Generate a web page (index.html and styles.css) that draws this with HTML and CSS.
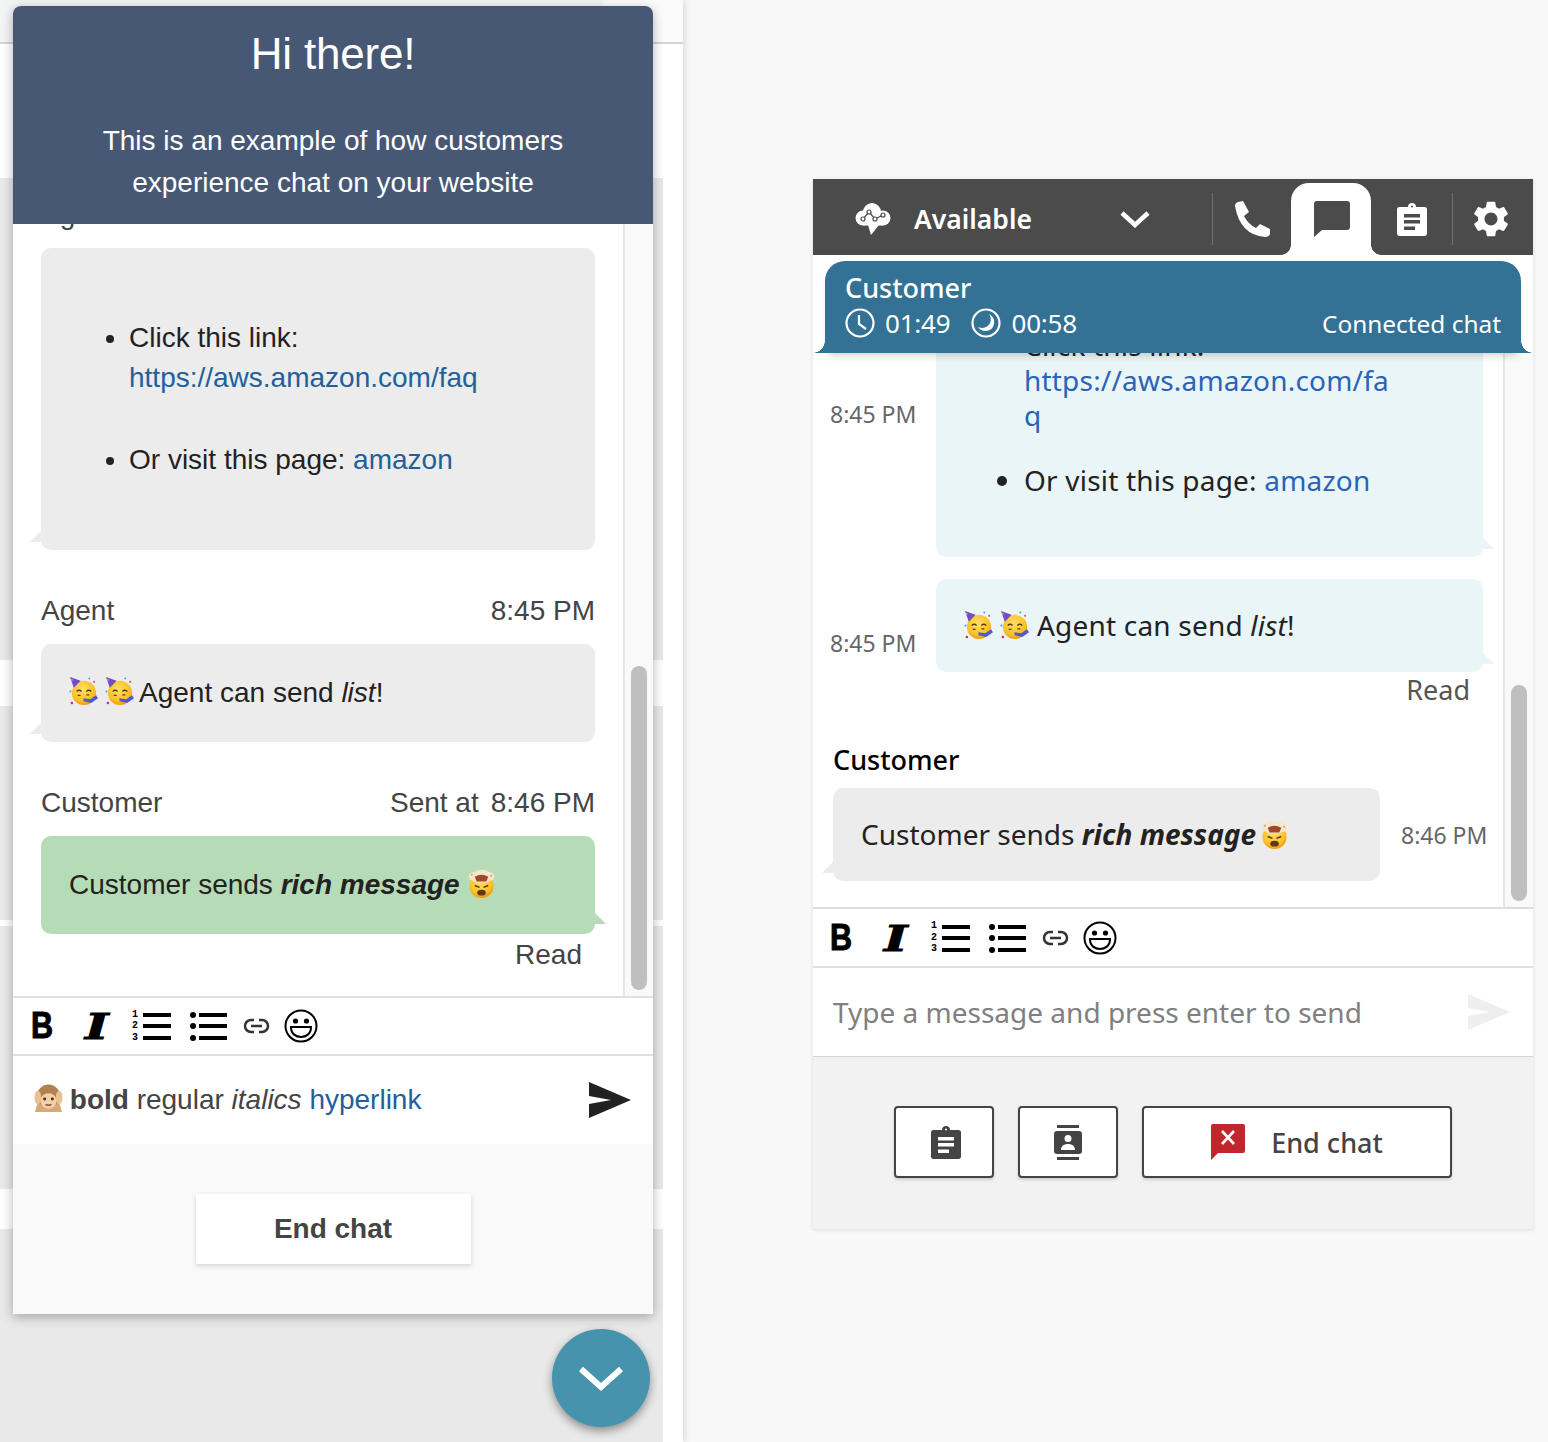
FILE: index.html
```html
<!DOCTYPE html>
<html lang="en">
<head>
    <meta charset="UTF-8">
    <title>Chat preview</title>
    <link rel="stylesheet" href="styles.css">
</head>
<body>
    <svg class="sprites" aria-hidden="true">
        <defs>
            <radialGradient id="g-face" cx="45%" cy="35%" r="70%">
                <stop offset="0" stop-color="#ffe066"/>
                <stop offset="0.7" stop-color="#fbbf24"/>
                <stop offset="1" stop-color="#f08c00"/>
            </radialGradient>
        </defs>
        <symbol id="i-party" viewBox="0 0 30 30">
            <circle cx="15.500" cy="16.500" r="12.500" fill="url(#g-face)"/>
            <path d="M1 0l11 4-7 7z" fill="#6f4fc4"/>
            <circle cx="3" cy="3" r="1" fill="#f48fb1"/>
            <path d="M8 15q2.500-2.500 5 0M18 15q2.500-2.500 5 0" fill="none" stroke="#5d3a12" stroke-width="1.500"/>
            <path d="M9 19h3M18 18.500h3" stroke="#5d3a12" stroke-width="1.200"/>
            <path d="M15 22l7 1 6-4 2 3-7 5-8-2z" fill="#4f5bd5"/>
            <circle cx="3" cy="27" r="1.300" fill="#e91e63"/>
            <circle cx="1.500" cy="15" r="1.100" fill="#42a5f5"/>
            <circle cx="26" cy="5" r="1.100" fill="#ef5350"/>
            <circle cx="21" cy="1.500" r="1" fill="#42a5f5"/>
        </symbol>
        <symbol id="i-mind" viewBox="0 0 30 30">
            <circle cx="15" cy="17.500" r="12.500" fill="url(#g-face)"/>
            <path d="M2 9C1 4 6 3 8 3 10 0 20 0 22 3 25 3 29 5 28 9 27 13 23 11 21 14H9C7 11 3 13 2 9Z" fill="#f5e6cc"/>
            <path d="M8 8q7-4 14 0l-2 5H10z" fill="#a1482c"/>
            <circle cx="5" cy="6" r="1" fill="#e0a030"/>
            <circle cx="25" cy="7" r="1" fill="#e0a030"/>
            <path d="M8 17l5 2M22 17l-5 2" stroke="#5d3a12" stroke-width="1.600"/>
            <ellipse cx="15" cy="24.500" rx="4.500" ry="3" fill="#5d3a12"/>
        </symbol>
        <symbol id="i-monkey" viewBox="0 0 30 30">
            <path d="M1 29l3-10 22 0 3 10z" fill="#d9a877"/>
            <circle cx="15" cy="12.500" r="12" fill="#b08050"/>
            <ellipse cx="15" cy="17.500" rx="8.500" ry="8" fill="#f2cfa6"/>
            <circle cx="11" cy="15.500" r="1.500" fill="#3e2a18"/>
            <circle cx="19" cy="15.500" r="1.500" fill="#3e2a18"/>
            <path d="M12 21q3 2 6 0" fill="none" stroke="#8d4a3a" stroke-width="1.500"/>
            <ellipse cx="4" cy="14" rx="3.500" ry="7" fill="#e8c193"/>
            <ellipse cx="26" cy="14" rx="3.500" ry="7" fill="#e8c193"/>
        </symbol>
        <symbol id="i-bars" viewBox="0 0 28 30">
            <rect y="2" width="28" height="4"/>
            <rect y="13" width="28" height="4"/>
            <rect y="25" width="28" height="4"/>
        </symbol>
        <symbol id="i-ul" viewBox="0 0 37 30">
            <circle cx="3" cy="4" r="3"/>
            <circle cx="3" cy="15" r="3"/>
            <circle cx="3" cy="27" r="3"/>
            <rect x="9" y="2" width="28" height="4"/>
            <rect x="9" y="13" width="28" height="4"/>
            <rect x="9" y="25" width="28" height="4"/>
        </symbol>
        <symbol id="i-link" viewBox="0 0 27 16">
            <path d="M11 2H8a6 6 0 0 0 0 12h3M16 2h3a6 6 0 0 1 0 12h-3M8 8h11" fill="none" stroke="#333" stroke-width="2.500"/>
        </symbol>
        <symbol id="i-smile" viewBox="0 0 34 34">
            <circle cx="17" cy="17" r="15.500" fill="#fff" stroke="#000" stroke-width="2"/>
            <circle cx="11.500" cy="12" r="2.600"/>
            <circle cx="22.500" cy="12" r="2.600"/>
            <path d="M7 18H27C27 25 22 28 17 28S7 25 7 18Z" fill="#fff" stroke="#000" stroke-width="2"/>
        </symbol>
        <symbol id="i-send" viewBox="0 0 42 36">
            <path d="M0 0L42 18 0 36V22L22 18 0 14Z"/>
        </symbol>
        <symbol id="i-clip" viewBox="0 0 30 33">
            <path fill-rule="evenodd" d="M3 4H11C11 1 13 0 15 0S19 1 19 4H27A2.500 2.500 0 0 1 30 6.500V30.500A2.500 2.500 0 0 1 27 33H3A2.500 2.500 0 0 1 0 30.500V6.500A2.500 2.500 0 0 1 3 4ZM14 3.500A1 1 0 0 0 16 3.500A1 1 0 0 0 14 3.500ZM7 11V14.500H23V11ZM7 17V20.500H23V17ZM7 23.500V27H18V23.500Z"/>
        </symbol>
        <symbol id="i-clock" viewBox="0 0 30 30">
            <circle cx="15" cy="15" r="13.500" fill="none" stroke="#fff" stroke-width="2.200"/>
            <path d="M14 7V16L21 21" fill="none" stroke="#fff" stroke-width="2.200"/>
        </symbol>
        <symbol id="i-moon" viewBox="0 0 30 30">
            <circle cx="15" cy="15" r="13.500" fill="none" stroke="#fff" stroke-width="2.200"/>
            <path d="M18 6C23 13 17 23 7 19 11 26 25 24 23 12 22.500 9.500 20.500 7.500 18 6Z" fill="#fff"/>
        </symbol>
    </svg>

    <div class="site">
        <div class="site-bg">
            <div class="bg-top"></div>
            <div class="bg-white-top"></div>
            <div class="bg-band bg-band-a"></div>
            <div class="bg-gap bg-gap-a"></div>
            <div class="bg-band bg-band-b"></div>
            <div class="bg-gap bg-gap-b"></div>
            <div class="bg-band bg-band-c"></div>
            <div class="bg-gap bg-gap-c"></div>
            <div class="bg-band bg-band-d"></div>
        </div>

        <div class="widget">
            <div class="widget-head">
                <h1>Hi there!</h1>
                <p>This is an example of how customers<br>experience chat on your website</p>
            </div>

            <div class="widget-body">
                <div class="transcript">
                    <div class="msg-head"><span>Agent</span><span>8:45 PM</span></div>
                    <div class="bubble bubble-agent">
                        <ul>
                            <li>Click this link:<br><a href="#">https://aws.amazon.com/faq</a></li>
                            <li>Or visit this page: <a href="#">amazon</a></li>
                        </ul>
                    </div>
                    <div class="msg-head"><span>Agent</span><span>8:45 PM</span></div>
                    <div class="bubble bubble-agent">
                        <svg class="emoji"><use href="#i-party"/></svg>
                        <svg class="emoji"><use href="#i-party"/></svg>
                        Agent can send <em>list</em>!
                    </div>
                    <div class="msg-head"><span>Customer</span><span class="sent">Sent at<span class="sent-time">8:46 PM</span></span></div>
                    <div class="bubble bubble-customer">
                        Customer sends <strong><em>rich message</em></strong>
                        <svg class="emoji"><use href="#i-mind"/></svg>
                    </div>
                    <div class="read">Read</div>
                </div>
                <div class="scroll-track"><div class="scroll-thumb"></div></div>
            </div>

            <div class="toolbar">
                <span class="tb-b">B</span>
                <span class="tb-i">I</span>
                <span class="tb-ol">
                    <span class="ol-digits"><span>1</span><span>2</span><span>3</span></span>
                    <svg class="ol-bars"><use href="#i-bars"/></svg>
                </span>
                <svg class="tb-ul"><use href="#i-ul"/></svg>
                <svg class="tb-link"><use href="#i-link"/></svg>
                <svg class="tb-smile"><use href="#i-smile"/></svg>
            </div>

            <div class="input-row">
                <div class="input-text">
                    <svg class="emoji"><use href="#i-monkey"/></svg>
                    <strong>bold</strong> regular <em>italics</em> <a href="#">hyperlink</a>
                </div>
                <svg class="send"><use href="#i-send"/></svg>
            </div>

            <div class="widget-foot">
                <button class="end-btn">End chat</button>
            </div>
        </div>

        <div class="fab">
            <svg width="46" height="26" viewBox="0 0 46 26"><path d="M3 4L23 22 43 4" fill="none" stroke="#fff" stroke-width="6"/></svg>
        </div>
    </div>

    <div class="ccp">
        <div class="bar">
            <div class="status">
                <svg class="cloud" width="36" height="32" viewBox="0 0 36 32">
                    <g fill="#fff">
                        <circle cx="8" cy="15" r="7.500"/>
                        <circle cx="17" cy="9" r="9"/>
                        <circle cx="28" cy="15" r="7.500"/>
                        <rect x="8" y="12" width="20" height="10.500"/>
                        <path d="M13 22H24L16 32Z"/>
                    </g>
                    <path d="M8 16L14 9 20 16 28 12" fill="none" stroke="#4b4b4b" stroke-width="1.200"/>
                    <g fill="#fff" stroke="#4b4b4b" stroke-width="1.200">
                        <circle cx="8" cy="16" r="2"/>
                        <circle cx="14" cy="9" r="2"/>
                        <circle cx="20" cy="16" r="2"/>
                        <circle cx="28" cy="12" r="2"/>
                    </g>
                </svg>
                <span class="status-text">Available</span>
                <svg class="chevron" width="30" height="18" viewBox="0 0 30 18"><path d="M2 3L15 15 28 3" fill="none" stroke="#fff" stroke-width="4.500"/></svg>
            </div>
            <div class="bar-cell bar-cell-phone">
                <svg width="37" height="37" viewBox="0 0 37 37"><path fill="#fff" d="M1 5Q1 2 4 1L9 0 15 11 10 15Q14 23 22 27L26 23 36 28 36 33Q35 36 31 36 6 34 1 5Z"/></svg>
            </div>
            <div class="bar-tab">
                <svg width="37" height="36" viewBox="0 0 37 36"><path fill="#4b4b4b" d="M3 0H34A3 3 0 0 1 37 3V26A3 3 0 0 1 34 29H9L1 36V3A3 3 0 0 1 3 0Z"/></svg>
            </div>
            <div class="bar-cell bar-cell-clip">
                <svg class="clip-white"><use href="#i-clip"/></svg>
            </div>
            <div class="bar-cell bar-cell-gear">
                <svg width="36" height="36" viewBox="2.500 2 19 20"><path fill="#fff" d="M19.140 12.940c.04-.3.06-.61.06-.94 0-.32-.02-.64-.07-.94l2.030-1.580c.18-.14.23-.41.12-.61l-1.920-3.320c-.12-.22-.37-.29-.59-.22l-2.390.96c-.5-.38-1.030-.7-1.620-.94l-.36-2.540c-.04-.24-.24-.41-.48-.41h-3.840c-.24 0-.43.17-.47.41l-.36 2.540c-.59.24-1.130.57-1.620.94l-2.390-.96c-.22-.08-.47 0-.59.22L2.740 8.870c-.12.21-.08.47.12.61l2.030 1.580c-.05.3-.09.63-.09.94s.02.64.07.94l-2.030 1.580c-.18.14-.23.41-.12.61l1.920 3.320c.12.22.37.29.59.22l2.390-.96c.5.38 1.030.7 1.620.94l.36 2.540c.05.24.24.41.48.41h3.840c.24 0 .44-.17.47-.41l.36-2.540c.59-.24 1.130-.56 1.620-.94l2.390.96c.22.08.47 0 .59-.22l1.920-3.320c.12-.22.07-.47-.12-.61l-2.010-1.580zM12 15.600c-1.980 0-3.600-1.620-3.600-3.600s1.620-3.600 3.600-3.600 3.600 1.620 3.600 3.600-1.620 3.600-3.600 3.600z"/></svg>
            </div>
        </div>

        <div class="contact">
            <div class="contact-name">Customer</div>
            <div class="contact-meta">
                <svg class="timer-icon"><use href="#i-clock"/></svg>
                <span class="timer">01:49</span>
                <svg class="timer-icon"><use href="#i-moon"/></svg>
                <span class="timer">00:58</span>
                <span class="contact-state">Connected chat</span>
            </div>
        </div>

        <div class="ccp-body">
            <div class="ccp-transcript">
                <div class="row">
                    <div class="time time-agent">8:45 PM</div>
                    <div class="col">
                        <div class="cbubble cbubble-agent cbubble-list">
                            <ul>
                                <li>Click this link:<br><a href="#">https://aws.amazon.com/fa<br>q</a></li>
                                <li>Or visit this page: <a href="#">amazon</a></li>
                            </ul>
                        </div>
                    </div>
                </div>
                <div class="row row-second">
                    <div class="time time-agent">8:45 PM</div>
                    <div class="col">
                        <div class="cbubble cbubble-agent cbubble-emoji">
                            <svg class="emoji"><use href="#i-party"/></svg>
                            <svg class="emoji"><use href="#i-party"/></svg>
                            Agent can send <em>list</em>!
                        </div>
                        <div class="cread">Read</div>
                    </div>
                </div>
                <div class="cust-name">Customer</div>
                <div class="row row-cust">
                    <div class="cbubble cbubble-cust">
                        Customer sends <strong><em>rich message</em></strong>
                        <svg class="emoji"><use href="#i-mind"/></svg>
                    </div>
                    <div class="time">8:46 PM</div>
                </div>
            </div>
            <div class="scroll-track ccp-track"><div class="scroll-thumb ccp-thumb"></div></div>
        </div>

        <div class="toolbar ccp-toolbar">
            <span class="tb-b">B</span>
            <span class="tb-i">I</span>
            <span class="tb-ol">
                <span class="ol-digits"><span>1</span><span>2</span><span>3</span></span>
                <svg class="ol-bars"><use href="#i-bars"/></svg>
            </span>
            <svg class="tb-ul"><use href="#i-ul"/></svg>
            <svg class="tb-link"><use href="#i-link"/></svg>
            <svg class="tb-smile"><use href="#i-smile"/></svg>
        </div>

        <div class="input-row ccp-input">
            <div class="placeholder">Type a message and press enter to send</div>
            <svg class="send send-off"><use href="#i-send"/></svg>
        </div>

        <div class="ccp-foot">
            <button class="ccp-btn">
                <svg class="clip-dark"><use href="#i-clip"/></svg>
            </button>
            <button class="ccp-btn">
                <svg width="28" height="35" viewBox="0 0 28 35">
                    <path fill="#444" fill-rule="evenodd" d="M3 0H25V3H3ZM3 32H25V35H3ZM3 6H25A3 3 0 0 1 28 9V26A3 3 0 0 1 25 29H3A3 3 0 0 1 0 26V9A3 3 0 0 1 3 6ZM14 10A3.500 3.500 0 0 0 14 17A3.500 3.500 0 0 0 14 10ZM7 25H21C21 21 18 19 14 19S7 21 7 25Z"/>
                </svg>
            </button>
            <button class="ccp-btn ccp-end">
                <svg width="34" height="36" viewBox="0 0 34 36">
                    <path fill="#c0272d" d="M2 0H32A2 2 0 0 1 34 2V27A2 2 0 0 1 32 29H7L0 36V2A2 2 0 0 1 2 0Z"/>
                    <path d="M11 7L23 20M23 7L11 20" stroke="#fff" stroke-width="2.600"/>
                </svg>
                <span>End chat</span>
            </button>
        </div>
    </div>
</body>
</html>
```
FILE: styles.css
```css
html, body {
    margin: 0;
    height: 1442px;
    overflow: hidden;
}
body {
    display: flex;
    background-color: #f8f8f8;
    font-family: "Liberation Sans", Arial, sans-serif;
}
.sprites {
    position: absolute;
    width: 0;
    height: 0;
}
a {
    color: #22609c;
    text-decoration: none;
}
button {
    font: inherit;
    cursor: pointer;
}

/* page behind the widget */
.site {
    position: relative;
    width: 683px;
    height: 1442px;
    flex: none;
    background-color: #fff;
    box-shadow: 2px 0 6px rgba(0,0,0,0.12);
}
.site-bg {
    position: absolute;
    inset: 0;
    display: flex;
    flex-direction: column;
}
.bg-top {
    height: 42px;
    background: linear-gradient(to right, #f3f4f6 603px, #fbfbfb 603px);
    border-bottom: 2px solid #d4d4d4;
}
.bg-white-top {
    height: 134px;
}
.bg-band {
    width: 663px;
    background-color: #e9e9e9;
}
.bg-band-a { height: 482px; }
.bg-band-b { height: 214px; }
.bg-band-c { height: 263px; }
.bg-band-d { height: 213px; }
.bg-gap-a { height: 46px; }
.bg-gap-b { height: 6px; }
.bg-gap-c { height: 40px; }

/* chat widget */
.widget {
    position: relative;
    display: flex;
    flex-direction: column;
    width: 640px;
    height: 1308px;
    margin: 6px 0 0 13px;
    background-color: #fff;
    border-radius: 8px 8px 0 0;
    box-shadow: 0 3px 12px rgba(0,0,0,0.3);
    color: #444;
    font-size: 28px;
}
.widget-head {
    height: 218px;
    flex: none;
    box-sizing: border-box;
    padding-top: 22px;
    background-color: #465874;
    border-radius: 8px 8px 0 0;
    color: #fff;
    text-align: center;
}
.widget-head h1 {
    margin: 0;
    font-size: 44px;
    font-weight: normal;
    line-height: 52px;
    letter-spacing: -0.2px;
}
.widget-head p {
    margin: 40px 0 0;
    font-size: 28px;
    line-height: 42px;
}
.widget-body {
    display: flex;
    height: 772px;
    flex: none;
}
.transcript {
    display: flex;
    flex-direction: column;
    justify-content: flex-end;
    box-sizing: border-box;
    width: 612px;
    padding: 0 28px 20px 28px;
    overflow: hidden;
    border-right: 2px solid #e6e6e6;
    line-height: 40px;
}
.msg-head {
    display: flex;
    justify-content: space-between;
    flex: none;
    margin-bottom: 12px;
    line-height: 42px;
}
.sent-time {
    margin-left: 12px;
}
.bubble {
    position: relative;
    flex: none;
    padding: 29px 28px;
    margin-bottom: 40px;
    border-radius: 10px;
    color: #222;
}
.bubble-agent {
    background-color: #ececec;
}
.bubble-agent::after {
    content: "";
    position: absolute;
    left: -11px;
    bottom: 8px;
    width: 11px;
    height: 11px;
    background-color: #ececec;
    clip-path: polygon(100% 0, 100% 100%, 0 100%);
}
.bubble-customer {
    margin-bottom: 0;
    background-color: #b5dcb6;
}
.bubble-customer::after {
    content: "";
    position: absolute;
    right: -11px;
    bottom: 10px;
    width: 11px;
    height: 11px;
    background-color: #b5dcb6;
    clip-path: polygon(0 0, 100% 100%, 0 100%);
}
.bubble ul {
    margin: 41px 0 41px;
    padding-left: 60px;
}
.bubble li + li {
    margin-top: 42px;
}
.emoji {
    width: 29px;
    height: 29px;
    margin-right: -1px;
    vertical-align: -4px;
}
.read {
    flex: none;
    margin-right: 13px;
    line-height: 42px;
    text-align: right;
}
.scroll-track {
    flex: 1;
    padding: 442px 6px 0 6px;
    background-color: #f9f9f9;
}
.scroll-thumb {
    height: 324px;
    background-color: #bfbfbf;
    border-radius: 8px;
}

/* editor toolbar, same on both panels */
.toolbar {
    display: flex;
    align-items: center;
    flex: none;
    box-sizing: border-box;
    height: 60px;
    padding-left: 18px;
    background-color: #fff;
    border-top: 2px solid #e0e0e0;
    border-bottom: 2px solid #e0e0e0;
    color: #000;
}
.tb-b {
    width: 54px;
    font: bold 36px/56px "Liberation Sans", Arial, sans-serif;
    -webkit-text-stroke: 1px #000;
    transform: scaleX(0.85);
    transform-origin: left center;
}
.tb-i {
    width: 47px;
    font: italic bold 36px/56px "DejaVu Serif", serif;
    -webkit-text-stroke: 1px #000;
    transform: scaleX(1.4);
    transform-origin: left center;
}
.tb-ol {
    display: flex;
    align-items: center;
    gap: 3px;
    width: 39px;
    margin-right: 19px;
}
.ol-digits {
    display: flex;
    flex-direction: column;
    width: 8px;
    font: bold 10px/11.500px "Liberation Mono", monospace;
}
.ol-bars {
    width: 28px;
    height: 30px;
}
.tb-ul {
    width: 37px;
    height: 30px;
    margin-right: 16px;
}
.tb-link {
    width: 27px;
    height: 16px;
    margin-right: 14px;
}
.tb-smile {
    width: 34px;
    height: 34px;
}
.input-row {
    display: flex;
    align-items: center;
    justify-content: space-between;
    flex: none;
    height: 88px;
    padding: 0 22px 0 21px;
    background-color: #fff;
}
.send {
    width: 42px;
    height: 36px;
    fill: #222;
}
.widget-foot {
    display: flex;
    justify-content: center;
    flex: 1;
    padding-top: 50px;
    background-color: #f9f9f9;
}
.end-btn {
    width: 275px;
    height: 70px;
    border: none;
    background-color: #fff;
    box-shadow: 0 2px 5px rgba(0,0,0,0.15);
    color: #444;
    font-weight: bold;
}
.fab {
    position: absolute;
    left: 552px;
    top: 1329px;
    display: flex;
    align-items: center;
    justify-content: center;
    width: 98px;
    height: 98px;
    background-color: #4693ae;
    border-radius: 50%;
    box-shadow: 0 4px 10px rgba(0,0,0,0.4);
}

/* contact control panel */
.ccp {
    display: flex;
    flex-direction: column;
    width: 720px;
    height: 1050px;
    margin: 179px 0 0 130px;
    background-color: #fff;
    box-shadow: 0 1px 4px rgba(0,0,0,0.12);
    color: #222;
    font-family: "Noto Sans", sans-serif;
    font-size: 27px;
}
.bar {
    display: flex;
    flex: none;
    height: 76px;
    background-color: #4b4b4b;
}
.status {
    position: relative;
    display: flex;
    align-items: center;
    width: 400px;
    box-sizing: border-box;
    padding: 4px 0 0 42px;
}
.status::after,
.bar-cell-clip::after {
    content: "";
    position: absolute;
    right: 0;
    top: 14px;
    bottom: 10px;
    width: 1px;
    background-color: #707070;
}
.status-text {
    margin-left: 23px;
    color: #fff;
    font-size: 26.500px;
    font-weight: 600;
}
.chevron {
    margin-left: auto;
    margin-right: 63px;
}
.bar-cell {
    position: relative;
    display: flex;
    align-items: center;
    justify-content: center;
    flex: 1;
    padding-top: 4px;
}
.bar-cell-phone {
    flex: none;
    width: 78px;
}
.bar-cell-clip {
    flex: none;
    box-sizing: border-box;
    width: 82px;
    padding-right: 1px;
}
.bar-cell-gear {
    padding-right: 4px;
}
.clip-white {
    width: 30px;
    height: 33px;
    fill: #fff;
}
.bar-tab {
    position: relative;
    display: flex;
    align-items: center;
    justify-content: center;
    flex: none;
    width: 80px;
    height: 72px;
    margin-top: 4px;
    background-color: #fff;
    border-radius: 18px 18px 0 0;
}
.bar-tab::before,
.bar-tab::after {
    content: "";
    position: absolute;
    bottom: 0;
    width: 10px;
    height: 10px;
}
.bar-tab::before {
    left: -10px;
    background: radial-gradient(circle at 0 0, transparent 9.500px, #fff 10px);
}
.bar-tab::after {
    right: -10px;
    background: radial-gradient(circle at 100% 0, transparent 9.500px, #fff 10px);
}
.contact {
    position: relative;
    z-index: 1;
    flex: none;
    box-sizing: border-box;
    height: 92px;
    margin: 6px 12px 0;
    padding: 9px 20px 0;
    background-color: #337195;
    border-radius: 20px 20px 0 0;
    box-shadow: 0 6px 8px -4px rgba(0,0,0,0.2);
    color: #fff;
}
.contact::before,
.contact::after {
    content: "";
    position: absolute;
    bottom: 0;
    width: 12px;
    height: 12px;
}
.contact::before {
    left: -12px;
    background: radial-gradient(circle at 0 0, transparent 11.500px, #337195 12px);
}
.contact::after {
    right: -12px;
    background: radial-gradient(circle at 100% 0, transparent 11.500px, #337195 12px);
}
.contact-name {
    line-height: 36px;
    font-weight: 500;
}
.contact-meta {
    display: flex;
    align-items: center;
    height: 34px;
    font-size: 26px;
}
.timer-icon {
    width: 30px;
    height: 30px;
    margin-right: 10px;
}
.timer {
    margin-right: 21px;
    letter-spacing: -0.2px;
}
.contact-state {
    margin-left: auto;
    font-size: 24.400px;
}
.ccp-body {
    display: flex;
    flex: none;
    height: 554px;
    border-bottom: 2px solid #ddd;
}
.ccp-transcript {
    display: flex;
    flex-direction: column;
    justify-content: flex-end;
    box-sizing: border-box;
    width: 692px;
    padding-bottom: 26px;
    overflow: hidden;
    border-right: 2px solid #e6e6e6;
    line-height: 35px;
}
.row {
    display: flex;
    align-items: center;
    flex: none;
    margin-bottom: 22px;
}
.row-second {
    margin-bottom: 35px;
}
.row-cust {
    margin: 0 0 0 20px;
    gap: 21px;
}
.time {
    flex: none;
    color: #666;
    font-size: 23px;
    line-height: 28px;
}
.time-agent {
    width: 106px;
    padding-left: 17px;
}
.col {
    flex: none;
    width: 547px;
}
.cbubble {
    position: relative;
    box-sizing: border-box;
    width: 547px;
    padding: 29px 28px;
    border-radius: 10px;
    color: #222;
    font-size: 28px;
}
.cbubble a {
    color: #2a63b8;
}
.cbubble ul {
    margin: 29px 0 30px;
    padding-left: 60px;
    letter-spacing: 0.2px;
}
.cbubble li + li {
    margin-top: 30px;
}
.cbubble-agent {
    background-color: #e9f5f7;
}
.cbubble-agent::after {
    content: "";
    position: absolute;
    right: -11px;
    bottom: 8px;
    width: 11px;
    height: 11px;
    background-color: #e9f5f7;
    clip-path: polygon(0 0, 100% 100%, 0 100%);
}
.cbubble-emoji {
    letter-spacing: 0.2px;
}
.cbubble-emoji .emoji {
    margin-right: 0;
}
.cbubble-cust {
    background-color: #ececec;
}
.cbubble-cust .emoji {
    margin-left: -3px;
}
.cbubble-cust::after {
    content: "";
    position: absolute;
    left: -11px;
    bottom: 8px;
    width: 11px;
    height: 11px;
    background-color: #ececec;
    clip-path: polygon(100% 0, 100% 100%, 0 100%);
}
.cread {
    margin-right: 13px;
    color: #555;
    text-align: right;
}
.cust-name {
    flex: none;
    margin: 0 0 10px 20px;
    color: #000;
    line-height: 36px;
    font-weight: 500;
}
.ccp-track {
    padding: 332px 6px 0;
}
.ccp-thumb {
    height: 216px;
}
.ccp-toolbar {
    height: 59px;
    padding-left: 17px;
    border-top: none;
}
.ccp-input {
    height: 89px;
    padding: 0 23px 0 20px;
    border-bottom: 1px solid #d5d5d5;
    box-sizing: border-box;
}
.placeholder {
    color: #808080;
    font-size: 28px;
}
.send-off {
    fill: #eee;
}
.ccp-foot {
    display: flex;
    justify-content: center;
    gap: 24px;
    flex: 1;
    padding: 49px 0 0;
    background-color: #f2f2f2;
}
.ccp-btn {
    display: flex;
    align-items: center;
    justify-content: center;
    box-sizing: border-box;
    width: 100px;
    height: 72px;
    padding: 0;
    background-color: #fff;
    border: 2px solid #444;
    border-radius: 4px;
    box-shadow: 0 2px 3px rgba(0,0,0,0.15);
    color: #444;
}
.clip-dark {
    width: 30px;
    height: 33px;
    margin-left: 3px;
    fill: #444;
}
.ccp-end {
    gap: 26px;
    width: 310px;
    font-weight: 500;
}
```
